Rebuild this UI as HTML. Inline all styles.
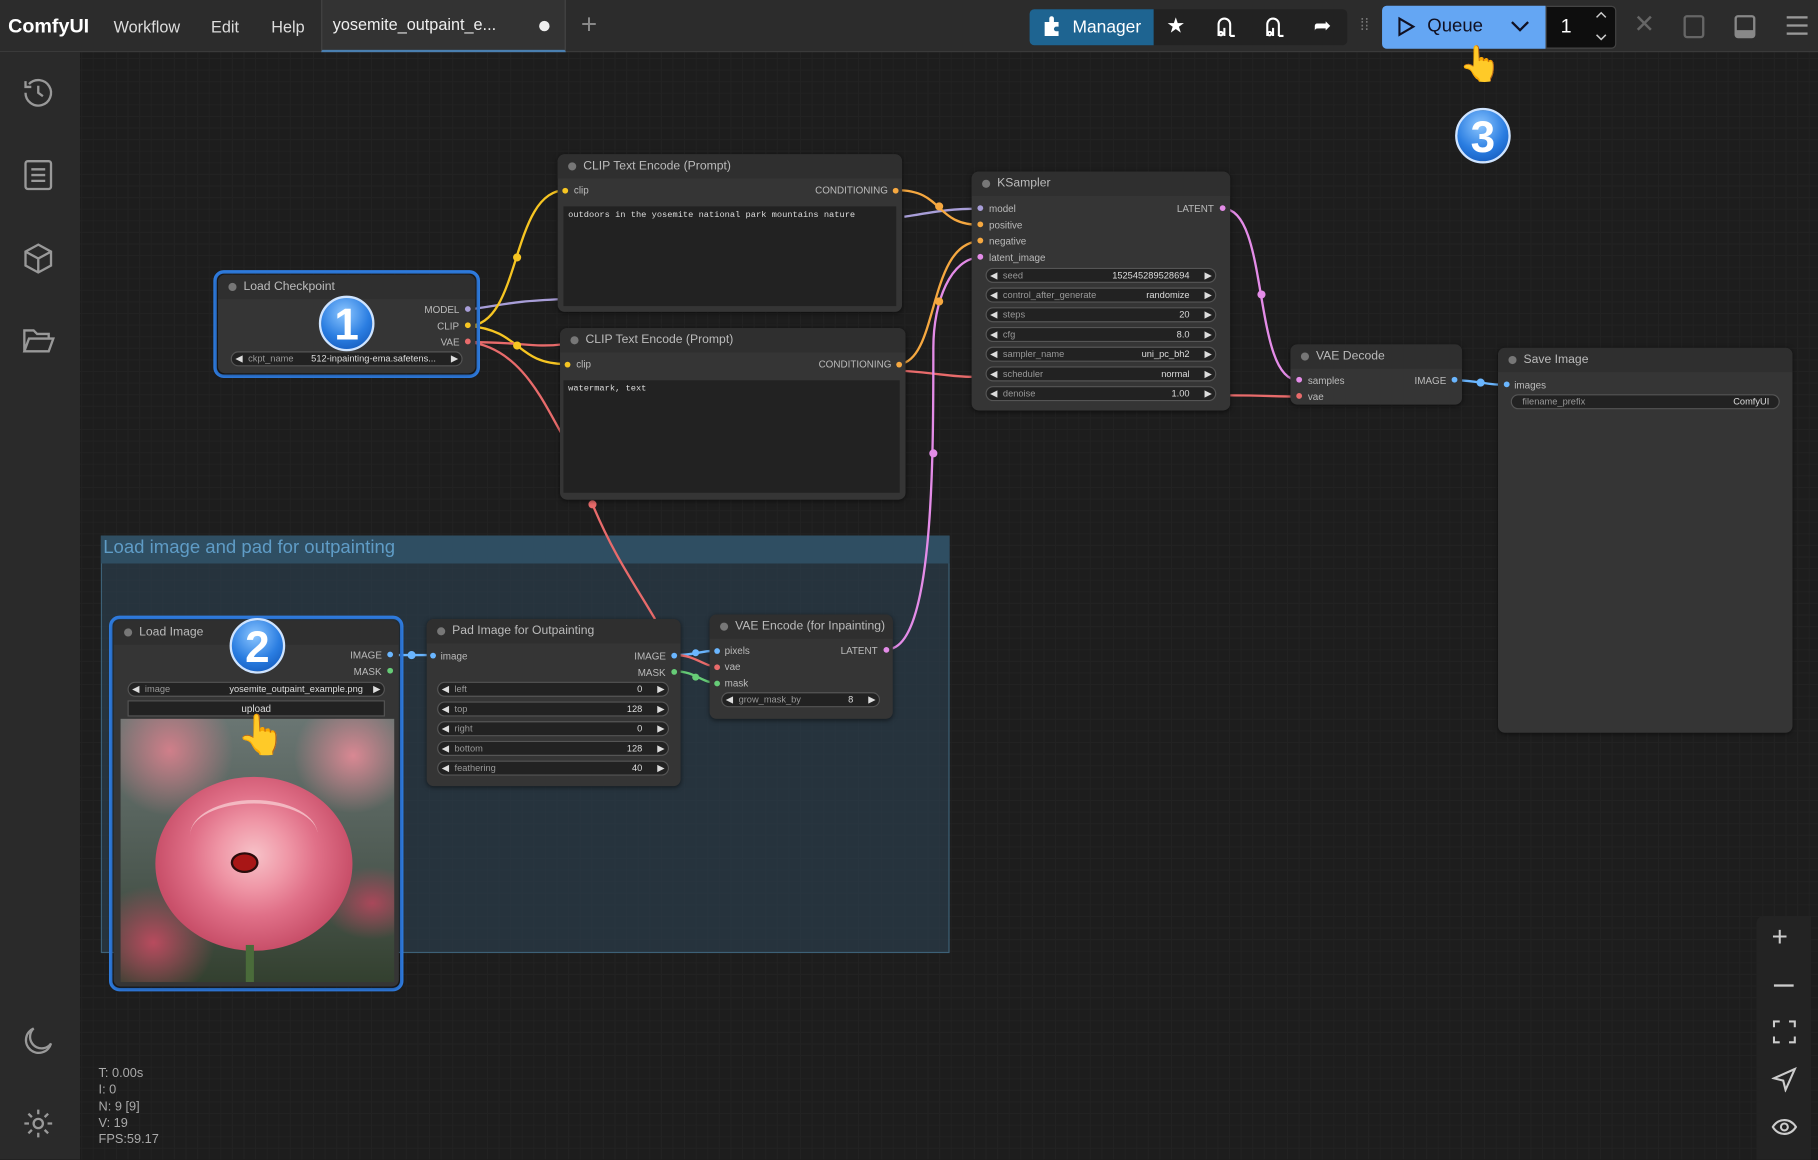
<!DOCTYPE html>
<html><head><meta charset="utf-8">
<style>
*{box-sizing:border-box;margin:0;padding:0}
body{width:1818px;height:1160px;overflow:hidden;background:#1c1c1c;font-family:"Liberation Sans",sans-serif}
#w{position:absolute;left:0;top:0;width:1568px;height:1000px;transform:scale(1.15944);transform-origin:0 0;background-color:#1d1d1d;
background-image:linear-gradient(#222 1px,transparent 1px),linear-gradient(90deg,#222 1px,transparent 1px);background-size:10px 10px;overflow:hidden}
.abs{position:absolute}
#top{left:0;top:0;width:1568px;height:45px;background:#2c2c2c;border-bottom:1px solid #3a3a3a}
#side{left:0;top:45px;width:69px;height:955px;background:#2a2a2a}
.node{position:absolute;background:#353535;border-radius:6px;box-shadow:0 1px 4px rgba(0,0,0,.5)}
.tt{position:absolute;left:0;top:0;right:0;height:21px;background:#2f2f2f;border-radius:6px 6px 0 0;color:#bbb;font-size:10.5px;line-height:21px;padding-left:22px}
.tt:before{content:"";position:absolute;left:9px;top:7px;width:7px;height:7px;border-radius:50%;background:#777}
.lb{position:absolute;font-size:8.5px;color:#bbb;white-space:nowrap}
.dot{position:absolute;width:5px;height:5px;border-radius:50%}
.wd{position:absolute;height:13px;border-radius:7px;background:#222;border:1px solid #555;font-size:8px;color:#999;line-height:11px;padding-left:14px}
.wd:before{content:"◀";position:absolute;left:3px;font-size:8px;color:#ddd}
.wd:after{content:"▶";position:absolute;right:3px;font-size:8px;color:#ddd}
.wd b{position:absolute;right:22px;font-weight:normal;color:#ddd}
.ta{position:absolute;background:#222;font-family:"Liberation Mono",monospace;font-size:7.5px;color:#ddd;padding:4px}
.badge{position:absolute;width:48px;height:48px;border-radius:50%;background:radial-gradient(circle at 45% 30%,#8cc6ff,#2a7de1 55%,#0d4fb0);color:#fff;font-weight:bold;font-size:38px;text-align:center;line-height:48px;border:2px solid #cfe4ff}
</style></head><body><div id="w">
<div class="abs" id="top"></div>
<div class="abs" style="left:7px;top:13px;color:#fff;font-weight:bold;font-size:17px">ComfyUI</div>
<div class="abs" style="left:98px;top:15px;color:#ddd;font-size:14px">Workflow</div>
<div class="abs" style="left:182px;top:15px;color:#ddd;font-size:14px">Edit</div>
<div class="abs" style="left:234px;top:15px;color:#ddd;font-size:14px">Help</div>
<div class="abs" style="left:277px;top:0;width:211px;height:45px;background:#333;border-left:1px solid #444;border-right:1px solid #444;border-bottom:2px solid #4a7fb0"></div>
<div class="abs" style="left:287px;top:13px;color:#eee;font-size:14px">yosemite_outpaint_e...</div>
<div class="abs" style="left:465px;top:18px;width:9px;height:9px;border-radius:50%;background:#eee"></div>
<div class="abs" style="left:501px;top:8px;color:#888;font-size:24px;font-weight:200">+</div>
<div class="abs" style="left:888px;top:8px;width:274px;height:31px;background:#222;border-radius:4px"></div>
<div class="abs" style="left:888px;top:8px;width:107px;height:31px;background:#1e6491;border-radius:4px 0 0 4px;color:#fff;font-size:15px;line-height:31px;padding-left:37px">Manager</div>
<svg class="abs" style="left:898px;top:13px" width="20" height="20" viewBox="0 0 20 20"><path d="M3 6h4V3a2 2 0 0 1 4 0v3h4v4h-2a2 2 0 0 0 0 4h2v4H3z" fill="#fff"/></svg>
<div class="abs" style="left:1006px;top:12px;color:#fff;font-size:18px">★</div>
<svg class="abs" style="left:1047px;top:12px" width="22" height="22" viewBox="0 0 22 22" fill="none" stroke="#fff" stroke-width="1.8"><path d="M4 19V9a5 5 0 0 1 10 0v10M14 19h4M9 12v7"/><circle cx="6" cy="17" r="1.5"/></svg>
<svg class="abs" style="left:1089px;top:12px" width="22" height="22" viewBox="0 0 22 22" fill="none" stroke="#fff" stroke-width="1.8"><path d="M4 19V9a5 5 0 0 1 10 0v10M14 19h4M9 12v7"/><circle cx="6" cy="17" r="1.5"/></svg>
<div class="abs" style="left:1133px;top:12px;color:#fff;font-size:18px">➦</div>
<div class="abs" style="left:1173px;top:13px;color:#777;font-size:14px">⁞⁞</div>
<div class="abs" style="left:1192px;top:5px;width:141px;height:37px;background:#64a6f3;border-radius:4px 0 0 4px"></div>
<svg class="abs" style="left:1205px;top:14px" width="16" height="18" viewBox="0 0 16 18"><path d="M2 2l12 7-12 7z" fill="none" stroke="#112" stroke-width="1.8"/></svg>
<div class="abs" style="left:1231px;top:14px;color:#112;font-size:16px">Queue</div>
<svg class="abs" style="left:1302px;top:16px" width="18" height="14"><path d="M2 3l7 7 7-7" fill="none" stroke="#112" stroke-width="2"/></svg>
<div class="abs" style="left:1333px;top:5px;width:61px;height:37px;background:#0e0e0e;border:1px solid #444;border-radius:0 4px 4px 0"></div>
<div class="abs" style="left:1346px;top:13px;color:#fff;font-size:17px">1</div>
<svg class="abs" style="left:1375px;top:9px" width="12" height="30" fill="none" stroke="#ccc" stroke-width="1.3"><path d="M2 6l4-4 4 4M2 21l4 4 4-4"/></svg>
<div class="abs" style="left:1409px;top:8px;color:#666;font-size:22px">✕</div>
<div class="abs" style="left:1452px;top:13px;width:18px;height:20px;border:2px solid #666;border-radius:3px"></div>
<div class="abs" style="left:1496px;top:13px;width:18px;height:20px;border:2px solid #888;border-radius:3px;border-bottom-width:7px"></div>
<div class="abs" style="left:1541px;top:14px;width:18px;height:16px;border-top:2px solid #999;border-bottom:2px solid #999"></div>
<div class="abs" style="left:1541px;top:21px;width:18px;height:2px;background:#999"></div>

<div class="abs" id="side"></div>
<svg class="abs" style="left:18px;top:65px" width="30" height="30" viewBox="0 0 30 30" fill="none" stroke="#999" stroke-width="2"><path d="M4 15a11 11 0 1 0 3-7.5M4 5v5h5M15 9v6l4 3"/></svg>
<svg class="abs" style="left:20px;top:137px" width="26" height="28" viewBox="0 0 26 28" fill="none" stroke="#999" stroke-width="2"><rect x="2" y="2" width="22" height="24" rx="2"/><path d="M7 9h12M7 14h12M7 19h12"/></svg>
<svg class="abs" style="left:18px;top:208px" width="30" height="30" viewBox="0 0 30 30" fill="none" stroke="#999" stroke-width="2"><path d="M15 3l11 6v12l-11 6-11-6V9zM4 9l11 6 11-6M15 15v12"/></svg>
<svg class="abs" style="left:18px;top:280px" width="30" height="28" viewBox="0 0 30 28" fill="none" stroke="#999" stroke-width="2"><path d="M3 23V5h8l3 3h10v4M3 23l4-11h21l-4 11z"/></svg>
<svg class="abs" style="left:18px;top:883px" width="30" height="30" viewBox="0 0 30 30" fill="none" stroke="#999" stroke-width="2"><path d="M20 21A10 10 0 0 1 11 4a11 11 0 1 0 15 13 10 10 0 0 1-6 4z"/></svg>
<svg class="abs" style="left:18px;top:954px" width="30" height="30" viewBox="0 0 30 30" fill="none" stroke="#999" stroke-width="2"><circle cx="15" cy="15" r="4"/><path d="M15 3v4M15 23v4M3 15h4M23 15h4M6.5 6.5l3 3M20.5 20.5l3 3M6.5 23.5l3-3M20.5 9.5l3-3"/></svg>

<!-- group -->
<div class="abs" style="left:87px;top:462px;width:732px;height:360px;background:rgba(45,70,88,.55);border:1px solid #3d6177"></div>
<div class="abs" style="left:87px;top:462px;width:732px;height:24px;background:#2f4e62"></div>
<div class="abs" style="left:89px;top:464px;color:#5f9cc6;font-size:16px">Load image and pad for outpainting</div>

<svg class="abs" style="left:0;top:0" width="1568" height="1000" fill="none" stroke-width="2">
<path d="M404 267 C440 262,440 260,485 258" stroke="#a89ed8"/>
<path d="M780 187 C810 182,820 180,846 180" stroke="#a89ed8"/>
<path d="M404 281 C450 281,440 164,488 164" stroke="#f6c522"/>
<path d="M404 281 C450 285,445 314,488 314" stroke="#f6c522"/>
<path d="M404 295 C450 295,460 300,485 297" stroke="#e86b6b"/>
<path d="M404 295 C450 300,470 350,485 375" stroke="#e86b6b"/>
<path d="M773 164 C815 164,805 194,846 194" stroke="#f6a840"/>
<path d="M776 314 C810 310,800 208,846 208" stroke="#f6a840"/>
<path d="M781 320 C810 322,820 325,838 325" stroke="#e86b6b"/>
<path d="M1055 180 C1095 180,1080 328,1120 328" stroke="#e48ce8"/>
<path d="M1061 341 C1090 341,1100 342,1120 342" stroke="#e86b6b"/>
<path d="M1255 328 C1275 328,1280 332,1299 332" stroke="#6ab6ff"/>
<path d="M765 560 C805 560,805 400,805 300 C805 260,820 222,846 222" stroke="#e48ce8"/>
<path d="M511 435 C530 480,545 500,565 534" stroke="#e86b6b"/>
<path d="M337 565 L372 565" stroke="#6ab6ff"/>
<path d="M582 565 C600 565,600 562,618 561" stroke="#6ab6ff"/>
<path d="M582 565 C600 565,605 574,618 575" stroke="#e86b6b"/>
<path d="M582 579 C600 579,605 589,618 589" stroke="#66cc77"/>
<g fill="#f6c522" stroke="none"><circle cx="446" cy="222" r="3.5"/><circle cx="446" cy="298" r="3.5"/></g>
<circle cx="810" cy="178" r="3.5" fill="#f6a840" stroke="none"/>
<circle cx="810" cy="260" r="3.5" fill="#f6a840" stroke="none"/>
<circle cx="1088" cy="254" r="3.5" fill="#e48ce8" stroke="none"/>
<circle cx="805" cy="391" r="3.5" fill="#e48ce8" stroke="none"/>
<circle cx="1277" cy="330" r="3.5" fill="#6ab6ff" stroke="none"/>
<circle cx="355" cy="565" r="3.5" fill="#6ab6ff" stroke="none"/>
<circle cx="600" cy="563" r="3" fill="#6ab6ff" stroke="none"/>
<circle cx="600" cy="584" r="3" fill="#66cc77" stroke="none"/>
<circle cx="511" cy="435" r="3.5" fill="#e86b6b" stroke="none"/>
</svg>

<div class="abs" style="left:184px;top:233px;width:230px;height:93px;border:3px solid #2f7ce0;border-radius:9px"></div>
<div class="node" style="left:188px;top:237px;width:222px;height:85px"><div class="tt">Load Checkpoint</div></div>
<div class="lb" style="left:366px;top:262px">MODEL</div><div class="dot" style="left:401px;top:264px;background:#a89ed8"></div>
<div class="lb" style="left:377px;top:276px">CLIP</div><div class="dot" style="left:401px;top:278px;background:#f6c522"></div>
<div class="lb" style="left:380px;top:290px">VAE</div><div class="dot" style="left:401px;top:292px;background:#e86b6b"></div>
<div class="wd" style="left:199px;top:303px;width:200px">ckpt_name<b style="color:#ddd">512-inpainting-ema.safetens...</b></div>

<div class="node" style="left:481px;top:133px;width:297px;height:136px"><div class="tt">CLIP Text Encode (Prompt)</div></div>
<div class="dot" style="left:485px;top:162px;background:#f6c522"></div><div class="lb" style="left:495px;top:159px">clip</div>
<div class="lb" style="left:703px;top:159px">CONDITIONING</div><div class="dot" style="left:770px;top:162px;background:#f6a840"></div>
<div class="ta" style="left:486px;top:178px;width:287px;height:86px">outdoors in the yosemite national park mountains nature</div>
<div class="node" style="left:483px;top:283px;width:298px;height:148px"><div class="tt">CLIP Text Encode (Prompt)</div></div>
<div class="dot" style="left:487px;top:312px;background:#f6c522"></div><div class="lb" style="left:497px;top:309px">clip</div>
<div class="lb" style="left:706px;top:309px">CONDITIONING</div><div class="dot" style="left:773px;top:312px;background:#f6a840"></div>
<div class="ta" style="left:486px;top:328px;width:290px;height:97px">watermark, text</div>

<div class="node" style="left:838px;top:148px;width:223px;height:206px"><div class="tt">KSampler</div></div>
<div class="dot" style="left:843px;top:177px;background:#a89ed8"></div><div class="lb" style="left:853px;top:175px">model</div>
<div class="lb" style="left:1015px;top:175px">LATENT</div><div class="dot" style="left:1052px;top:177px;background:#e48ce8"></div>
<div class="dot" style="left:843px;top:191px;background:#f6a840"></div><div class="lb" style="left:853px;top:189px">positive</div>
<div class="dot" style="left:843px;top:205px;background:#f6a840"></div><div class="lb" style="left:853px;top:203px">negative</div>
<div class="dot" style="left:843px;top:219px;background:#e48ce8"></div><div class="lb" style="left:853px;top:217px">latent_image</div>
<div class="wd" style="left:850px;top:231px;width:199px">seed<b>152545289528694</b></div>
<div class="wd" style="left:850px;top:248px;width:199px">control_after_generate<b>randomize</b></div>
<div class="wd" style="left:850px;top:265px;width:199px">steps<b>20</b></div>
<div class="wd" style="left:850px;top:282px;width:199px">cfg<b>8.0</b></div>
<div class="wd" style="left:850px;top:299px;width:199px">sampler_name<b>uni_pc_bh2</b></div>
<div class="wd" style="left:850px;top:316px;width:199px">scheduler<b>normal</b></div>
<div class="wd" style="left:850px;top:333px;width:199px">denoise<b>1.00</b></div>

<div class="node" style="left:1113px;top:297px;width:148px;height:52px"><div class="tt">VAE Decode</div></div>
<div class="dot" style="left:1118px;top:325px;background:#e48ce8"></div><div class="lb" style="left:1128px;top:323px">samples</div>
<div class="lb" style="left:1220px;top:323px">IMAGE</div><div class="dot" style="left:1252px;top:325px;background:#6ab6ff"></div>
<div class="dot" style="left:1118px;top:339px;background:#e86b6b"></div><div class="lb" style="left:1128px;top:337px">vae</div>
<div class="node" style="left:1292px;top:300px;width:254px;height:332px"><div class="tt">Save Image</div></div>
<div class="dot" style="left:1297px;top:329px;background:#6ab6ff"></div><div class="lb" style="left:1306px;top:327px">images</div>
<div class="abs" style="left:1303px;top:340px;width:232px;height:13px;border-radius:7px;background:#222;border:1px solid #555;font-size:8px;color:#999;line-height:11px;padding-left:9px">filename_prefix<span style="position:absolute;right:8px;color:#ddd">ComfyUI</span></div>

<div class="abs" style="left:94px;top:531px;width:254px;height:324px;border:3px solid #2f7ce0;border-radius:9px"></div>
<div class="node" style="left:98px;top:535px;width:246px;height:316px"><div class="tt">Load Image</div></div>
<div class="lb" style="left:302px;top:560px">IMAGE</div><div class="dot" style="left:334px;top:562px;background:#6ab6ff"></div>
<div class="lb" style="left:305px;top:574px">MASK</div><div class="dot" style="left:334px;top:576px;background:#66cc77"></div>
<div class="wd" style="left:110px;top:588px;width:222px">image<b style="right:18px">yosemite_outpaint_example.png</b></div>
<div class="abs" style="left:110px;top:604px;width:222px;height:14px;background:#222;border:1px solid #555;color:#ddd;font-size:8.5px;text-align:center;line-height:12px">upload</div>
<div class="abs" style="left:104px;top:620px;width:236px;height:227px;overflow:hidden;background:radial-gradient(ellipse at 18% 12%,#d07f8a 0,transparent 20%),radial-gradient(ellipse at 85% 14%,#d98893 0,transparent 18%),radial-gradient(ellipse at 12% 85%,#b84b5e 0,transparent 18%),radial-gradient(ellipse at 92% 70%,#a9485a 0,transparent 14%),linear-gradient(#6a7673,#4c5850 60%,#33402f)">
<div class="abs" style="left:30px;top:50px;width:170px;height:150px;border-radius:50%;background:radial-gradient(ellipse at 50% 45%,#f7c2c8 0,#ef96a6 25%,#e07088 45%,#c9506a 70%,#a83d55 100%)"></div>
<div class="abs" style="left:60px;top:70px;width:110px;height:60px;border-radius:50%;border-top:3px solid #f7c9cf;opacity:.8"></div>
<div class="abs" style="left:95px;top:115px;width:24px;height:18px;border-radius:50%;background:#a81616;border:2px solid #2a0c0c"></div>
<div class="abs" style="left:108px;top:195px;width:7px;height:40px;background:#4a6b3a"></div></div>

<div class="node" style="left:368px;top:534px;width:219px;height:144px"><div class="tt">Pad Image for Outpainting</div></div>
<div class="dot" style="left:371px;top:563px;background:#6ab6ff"></div><div class="lb" style="left:380px;top:561px">image</div>
<div class="lb" style="left:547px;top:561px">IMAGE</div><div class="dot" style="left:579px;top:563px;background:#6ab6ff"></div>
<div class="lb" style="left:550px;top:575px">MASK</div><div class="dot" style="left:579px;top:577px;background:#66cc77"></div>
<div class="wd" style="left:377px;top:588px;width:200px">left<b>0</b></div>
<div class="wd" style="left:377px;top:605px;width:200px">top<b>128</b></div>
<div class="wd" style="left:377px;top:622px;width:200px">right<b>0</b></div>
<div class="wd" style="left:377px;top:639px;width:200px">bottom<b>128</b></div>
<div class="wd" style="left:377px;top:656px;width:200px">feathering<b>40</b></div>

<div class="node" style="left:612px;top:530px;width:158px;height:90px"><div class="tt">VAE Encode (for Inpainting)</div></div>
<div class="dot" style="left:616px;top:559px;background:#6ab6ff"></div><div class="lb" style="left:625px;top:556px">pixels</div>
<div class="lb" style="left:725px;top:556px">LATENT</div><div class="dot" style="left:762px;top:558px;background:#e48ce8"></div>
<div class="dot" style="left:616px;top:573px;background:#e86b6b"></div><div class="lb" style="left:625px;top:570px">vae</div>
<div class="dot" style="left:616px;top:587px;background:#66cc77"></div><div class="lb" style="left:625px;top:584px">mask</div>
<div class="wd" style="left:622px;top:597px;width:137px">grow_mask_by<b>8</b></div>

<div class="badge" style="left:275px;top:255px">1</div>
<div class="badge" style="left:198px;top:533px">2</div>
<div class="badge" style="left:1255px;top:93px">3</div>
<div class="abs" style="left:1258px;top:38px;font-size:30px">👆</div>
<div class="abs" style="left:204px;top:614px;font-size:34px">👆</div>

<div class="abs" style="left:85px;top:919px;color:#aaa;font-size:11px;line-height:14.3px">T: 0.00s<br>I: 0<br>N: 9 [9]<br>V: 19<br>FPS:59.17</div>

<div class="abs" style="left:1515px;top:790px;width:47px;height:210px;background:#232323;border-radius:6px 0 0 0"></div>
<div class="abs" style="left:1528px;top:795px;font-size:24px;color:#ccc">+</div>
<div class="abs" style="left:1530px;top:849px;width:17px;height:2px;background:#ccc"></div>
<svg class="abs" style="left:1529px;top:880px" width="20" height="20" fill="none" stroke="#ccc" stroke-width="1.8"><path d="M1 6V1h5M14 1h5v5M19 14v5h-5M6 19H1v-5"/></svg>
<svg class="abs" style="left:1528px;top:920px" width="22" height="22" fill="none" stroke="#ccc" stroke-width="1.8"><path d="M20 2L2 10l8 2 2 8z"/></svg>
<svg class="abs" style="left:1528px;top:964px" width="22" height="16" fill="none" stroke="#ccc" stroke-width="1.8"><path d="M1 8c5-8 15-8 20 0-5 8-15 8-20 0z"/><circle cx="11" cy="8" r="3"/></svg>
</div></body></html>
